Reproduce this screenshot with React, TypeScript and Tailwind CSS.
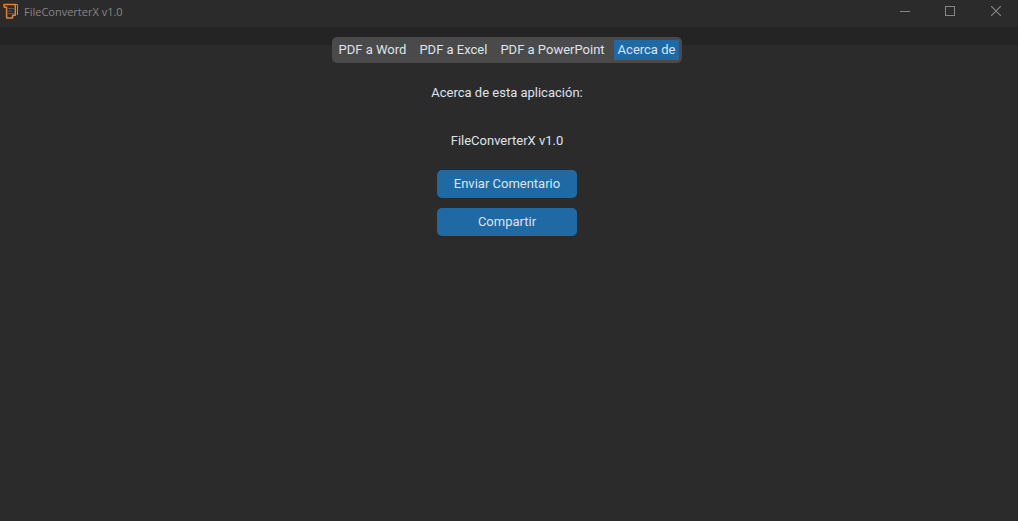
import { useState } from "react";

const tabs = ["PDF a Word", "PDF a Excel", "PDF a PowerPoint", "Acerca de"];

function AppIcon() {
  return (
    <svg width="16" height="18" viewBox="0 0 16 18" fill="none" aria-hidden="true">
      <path d="M5 5.5H11M5 8H9M5 10.5H11" stroke="#555a60" strokeWidth="1.2" />
      <path
        d="M1 4.2V1.6H12.3V12.2H9.6V15H3.6V4.2H1"
        stroke="#ef7d27"
        strokeWidth="1.5"
        strokeLinejoin="round"
      />
      <path d="M12 1.4H14.5V12" stroke="#d9823f" strokeWidth="1" />
    </svg>
  );
}

function TitleBar() {
  return (
    <header className="flex h-[27px] items-start justify-between bg-[#2b2b2b] pl-[3px] text-[#868686]">
      <div className="flex h-6 items-center gap-[5px]">
        <AppIcon />
        <h1 className="font-['Open_Sans','Noto_Sans',sans-serif] text-[11px]">FileConverterX v1.0</h1>
      </div>
      <div className="flex">
        <button aria-label="Minimizar" className="flex h-[22px] w-[45px] items-center justify-center">
          <svg width="10" height="10" viewBox="0 0 10 10" shapeRendering="crispEdges">
            <path d="M0 5.5H10" stroke="currentColor" />
          </svg>
        </button>
        <button aria-label="Maximizar" className="flex h-[22px] w-[46px] items-center justify-center">
          <svg width="10" height="10" viewBox="0 0 10 10" fill="none" shapeRendering="crispEdges">
            <rect x="0.5" y="0.5" width="9" height="9" stroke="currentColor" />
          </svg>
        </button>
        <button aria-label="Cerrar" className="flex h-[22px] w-[45px] items-center justify-center">
          <svg width="10" height="10" viewBox="0 0 10 10" fill="none">
            <path d="M0 0L10 10M10 0L0 10" stroke="currentColor" strokeWidth="1.2" />
          </svg>
        </button>
      </div>
    </header>
  );
}

function ActionButton({ label }: { label: string }) {
  return (
    <button className="h-7 w-[140px] rounded-[5px] bg-[#1f6aa5] text-[#dce4ee] hover:bg-[#144870]">
      {label}
    </button>
  );
}

export default function App() {
  const [active, setActive] = useState("Acerca de");
  return (
    <div className="flex min-h-screen flex-col bg-[#2b2b2b] font-[Roboto,sans-serif] text-[13px] leading-5 text-[#dce4ee]">
      <TitleBar />
      <div className="h-[18px] bg-[#242424]" />
      <main className="-mt-2 flex flex-col items-center pr-1">
        <div role="tablist" className="flex gap-[5px] rounded-[5px] bg-[#4a4a4a] p-[3px]">
          {tabs.map((tab) => (
            <button
              key={tab}
              role="tab"
              aria-selected={tab === active}
              onClick={() => setActive(tab)}
              className={tab === active ? "rounded-[1px] bg-[#1f6aa5] px-1" : "rounded-[1px] px-1"}
            >
              {tab}
            </button>
          ))}
        </div>
        <section className="flex flex-col items-center pt-5">
          <p>Acerca de esta aplicación:</p>
          <p className="mt-7">FileConverterX v1.0</p>
          <div className="mt-[19px] flex flex-col gap-2.5">
            <ActionButton label="Enviar Comentario" />
            <ActionButton label="Compartir" />
          </div>
        </section>
      </main>
    </div>
  );
}
